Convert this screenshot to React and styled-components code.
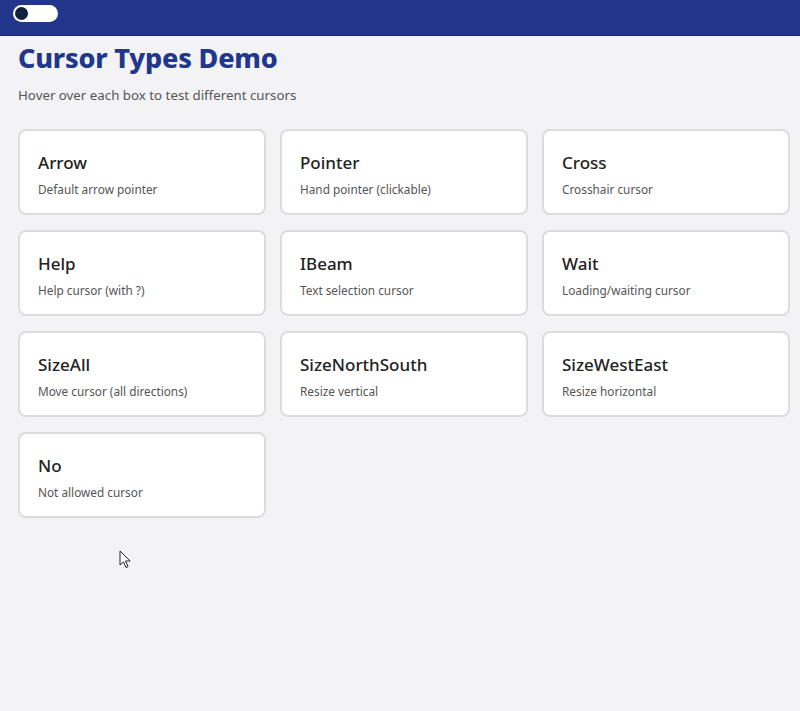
import styled, { createGlobalStyle } from "styled-components";

const cursors = [
  { name: "Arrow", desc: "Default arrow pointer", cursor: "default" },
  { name: "Pointer", desc: "Hand pointer (clickable)", cursor: "pointer" },
  { name: "Cross", desc: "Crosshair cursor", cursor: "crosshair" },
  { name: "Help", desc: "Help cursor (with ?)", cursor: "help" },
  { name: "IBeam", desc: "Text selection cursor", cursor: "text" },
  { name: "Wait", desc: "Loading/waiting cursor", cursor: "wait" },
  { name: "SizeAll", desc: "Move cursor (all directions)", cursor: "move" },
  { name: "SizeNorthSouth", desc: "Resize vertical", cursor: "ns-resize" },
  { name: "SizeWestEast", desc: "Resize horizontal", cursor: "ew-resize" },
  { name: "No", desc: "Not allowed cursor", cursor: "not-allowed" },
];

function App() {
  return (
    <Page>
      <GlobalStyle />
      <TopBar>
        <Toggle>
          <Knob />
        </Toggle>
      </TopBar>
      <Content>
        <Title>Cursor Types Demo</Title>
        <Subtitle>Hover over each box to test different cursors</Subtitle>
        <Grid>
          {cursors.map((c) => (
            <Card key={c.name} $cursor={c.cursor}>
              <CardTitle>{c.name}</CardTitle>
              <CardDesc>{c.desc}</CardDesc>
            </Card>
          ))}
        </Grid>
      </Content>
      <MousePointer width="14" height="20" viewBox="0 0 14 20">
        <path
          d="M1 1 L1 15 L4.5 11.8 L7 17.5 L9 16.6 L6.6 11 L11.2 11 Z"
          fill="#fff"
          stroke="#222"
          strokeWidth="1"
          strokeLinejoin="round"
        />
      </MousePointer>
    </Page>
  );
}

export default App;

const GlobalStyle = createGlobalStyle`
  html, body {
    margin: 0;
    padding: 0;
    background: #f3f3f5;
  }
  body {
    font-family: "Noto Sans", "Open Sans", sans-serif;
  }
`;

const Page = styled.div`
  min-height: 711px;
  position: relative;
  background: #f3f3f5;
`;

const TopBar = styled.div`
  height: 36px;
  background-color: #21358b;
  display: flex;
  align-items: center;
  padding-left: 13px;
  box-sizing: border-box;
  border-bottom: 1px solid #1a2a70;
`;

const Toggle = styled.div`
  width: 45px;
  height: 17px;
  border-radius: 9px;
  background: #ffffff;
  display: flex;
  align-items: center;
  padding-left: 2px;
  box-sizing: border-box;
  margin-top: -8px;
`;

const Knob = styled.div`
  width: 13px;
  height: 13px;
  border-radius: 50%;
  background: #10213f;
`;

const Content = styled.div`
  padding: 4px 10px 0 18px;
`;

const Title = styled.h1`
  margin: 0;
  font-family: "Noto Sans", sans-serif;
  font-size: 27px;
  font-weight: 800;
  color: #21378b;
  line-height: 36px;
  letter-spacing: -0.2px;
`;

const Subtitle = styled.p`
  margin: 10px 0 0;
  font-size: 13.3px;
  color: #555;
  line-height: 18px;
`;

const Grid = styled.div`
  display: grid;
  grid-template-columns: repeat(3, 1fr);
  column-gap: 14px;
  row-gap: 15px;
  margin-top: 25px;
`;

const Card = styled.div`
  height: 86px;
  box-sizing: border-box;
  background: #ffffff;
  border: 2px solid #dcdcdc;
  border-radius: 8px;
  padding: 20px 18px 0;
  cursor: ${(p) => p.$cursor};
`;

const CardTitle = styled.div`
  font-size: 17px;
  font-weight: 500;
  color: #222;
  line-height: 24px;
`;

const CardDesc = styled.div`
  margin-top: 5px;
  font-size: 11.8px;
  color: #555;
  line-height: 18px;
`;

const MousePointer = styled.svg`
  position: absolute;
  left: 119px;
  top: 550px;
`;
